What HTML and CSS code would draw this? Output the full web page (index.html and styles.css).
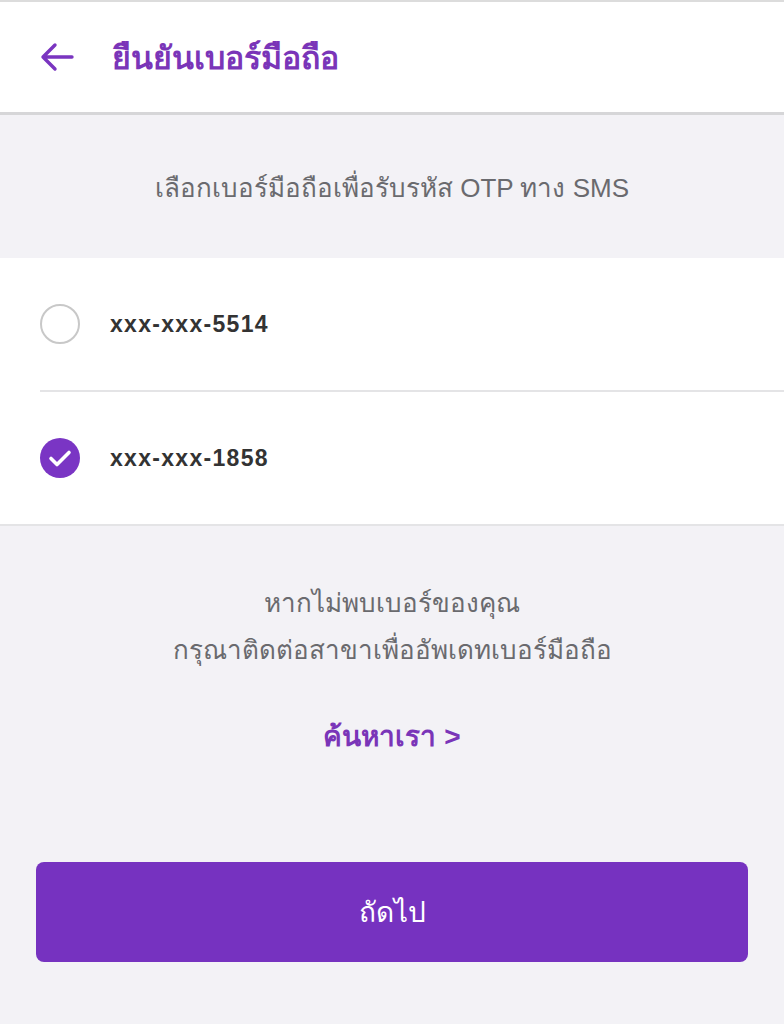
FILE: index.html
```html
<!DOCTYPE html>
<html lang="th">
<head>
    <meta charset="UTF-8">
    <meta name="viewport" content="width=device-width, initial-scale=1.0">
    <link rel="stylesheet" href="styles.css">
    <title>ยืนยันเบอร์มือถือ</title>
</head>
<body>

<header class="top-bar">
    <span class="back-btn">
        <svg width="34" height="30" viewBox="0 0 34 30">
            <path d="M32 15H3M15 3L3 15l12 12" fill="none" stroke="#7a35c0" stroke-width="3.4" stroke-linecap="round" stroke-linejoin="round"/>
        </svg>
    </span>
    <h1 class="title">ยืนยันเบอร์มือถือ</h1>
</header>

<p class="hint">เลือกเบอร์มือถือเพื่อรับรหัส OTP ทาง SMS</p>

<ul class="phone-list">
    <li class="phone-row">
        <span class="radio"></span>
        <span class="phone">xxx-xxx-5514</span>
    </li>
    <li class="phone-row">
        <span class="radio checked">
            <svg width="40" height="40" viewBox="0 0 40 40">
                <circle cx="20" cy="20" r="20" fill="#7a35c4"/>
                <path d="M11 20.5l6 6 12-12" fill="none" stroke="#fff" stroke-width="3.6" stroke-linecap="round" stroke-linejoin="round"/>
            </svg>
        </span>
        <span class="phone">xxx-xxx-1858</span>
    </li>
</ul>

<div class="note">
    <p>หากไม่พบเบอร์ของคุณ<br>กรุณาติดต่อสาขาเพื่ออัพเดทเบอร์มือถือ</p>
    <a class="find-link" href="#">ค้นหาเรา &gt;</a>
</div>

<div class="actions">
    <button class="next-btn">ถัดไป</button>
</div>

</body>
</html>
```

FILE: styles.css
```css
body {
    font-family: 'Liberation Sans', 'Noto Sans', sans-serif;
    background: #f3f2f6;
    margin: 0;
    border-top: 2px solid #dcdcdc;
}

.top-bar {
    display: flex;
    align-items: center;
    height: 110px;
    background: #fff;
    border-bottom: 3px solid #d6d6d8;
    padding: 0 40px;
}

.back-btn {
    display: flex;
    width: 72px;
}

.title {
    margin: 0;
    font-size: 32px;
    font-weight: bold;
    color: #7a35b8;
}

.hint {
    margin: 0;
    padding: 55px 0 52px;
    text-align: center;
    font-size: 26px;
    color: #6a6a6e;
    line-height: 36px;
}

.phone-list {
    list-style: none;
    margin: 0;
    padding: 0 0 0 40px;
    background: #fff;
    border-bottom: 2px solid #e4e4e6;
}

.phone-row {
    display: flex;
    align-items: center;
    height: 132px;
}

.phone-row + .phone-row {
    border-top: 2px solid #e4e4e6;
}

.radio {
    width: 36px;
    height: 36px;
    border: 2px solid #c8c8c8;
    border-radius: 50%;
    margin-right: 30px;
}

.radio.checked {
    width: 40px;
    height: 40px;
    border: none;
}

.phone {
    font-size: 23px;
    font-weight: bold;
    letter-spacing: 1.3px;
    color: #333;
}

.note {
    text-align: center;
    padding-top: 54px;
}

.note p {
    margin: 0;
    font-size: 26px;
    line-height: 47px;
    color: #6a6a6e;
}

.find-link {
    display: inline-block;
    margin-top: 40px;
    font-size: 28px;
    font-weight: bold;
    color: #7a35b8;
    text-decoration: none;
}

.actions {
    padding: 104px 36px 0;
}

.next-btn {
    display: block;
    width: 100%;
    height: 100px;
    border: none;
    border-radius: 8px;
    background: #7632c0;
    color: #fff;
    font-family: inherit;
    font-size: 28px;
}
```
